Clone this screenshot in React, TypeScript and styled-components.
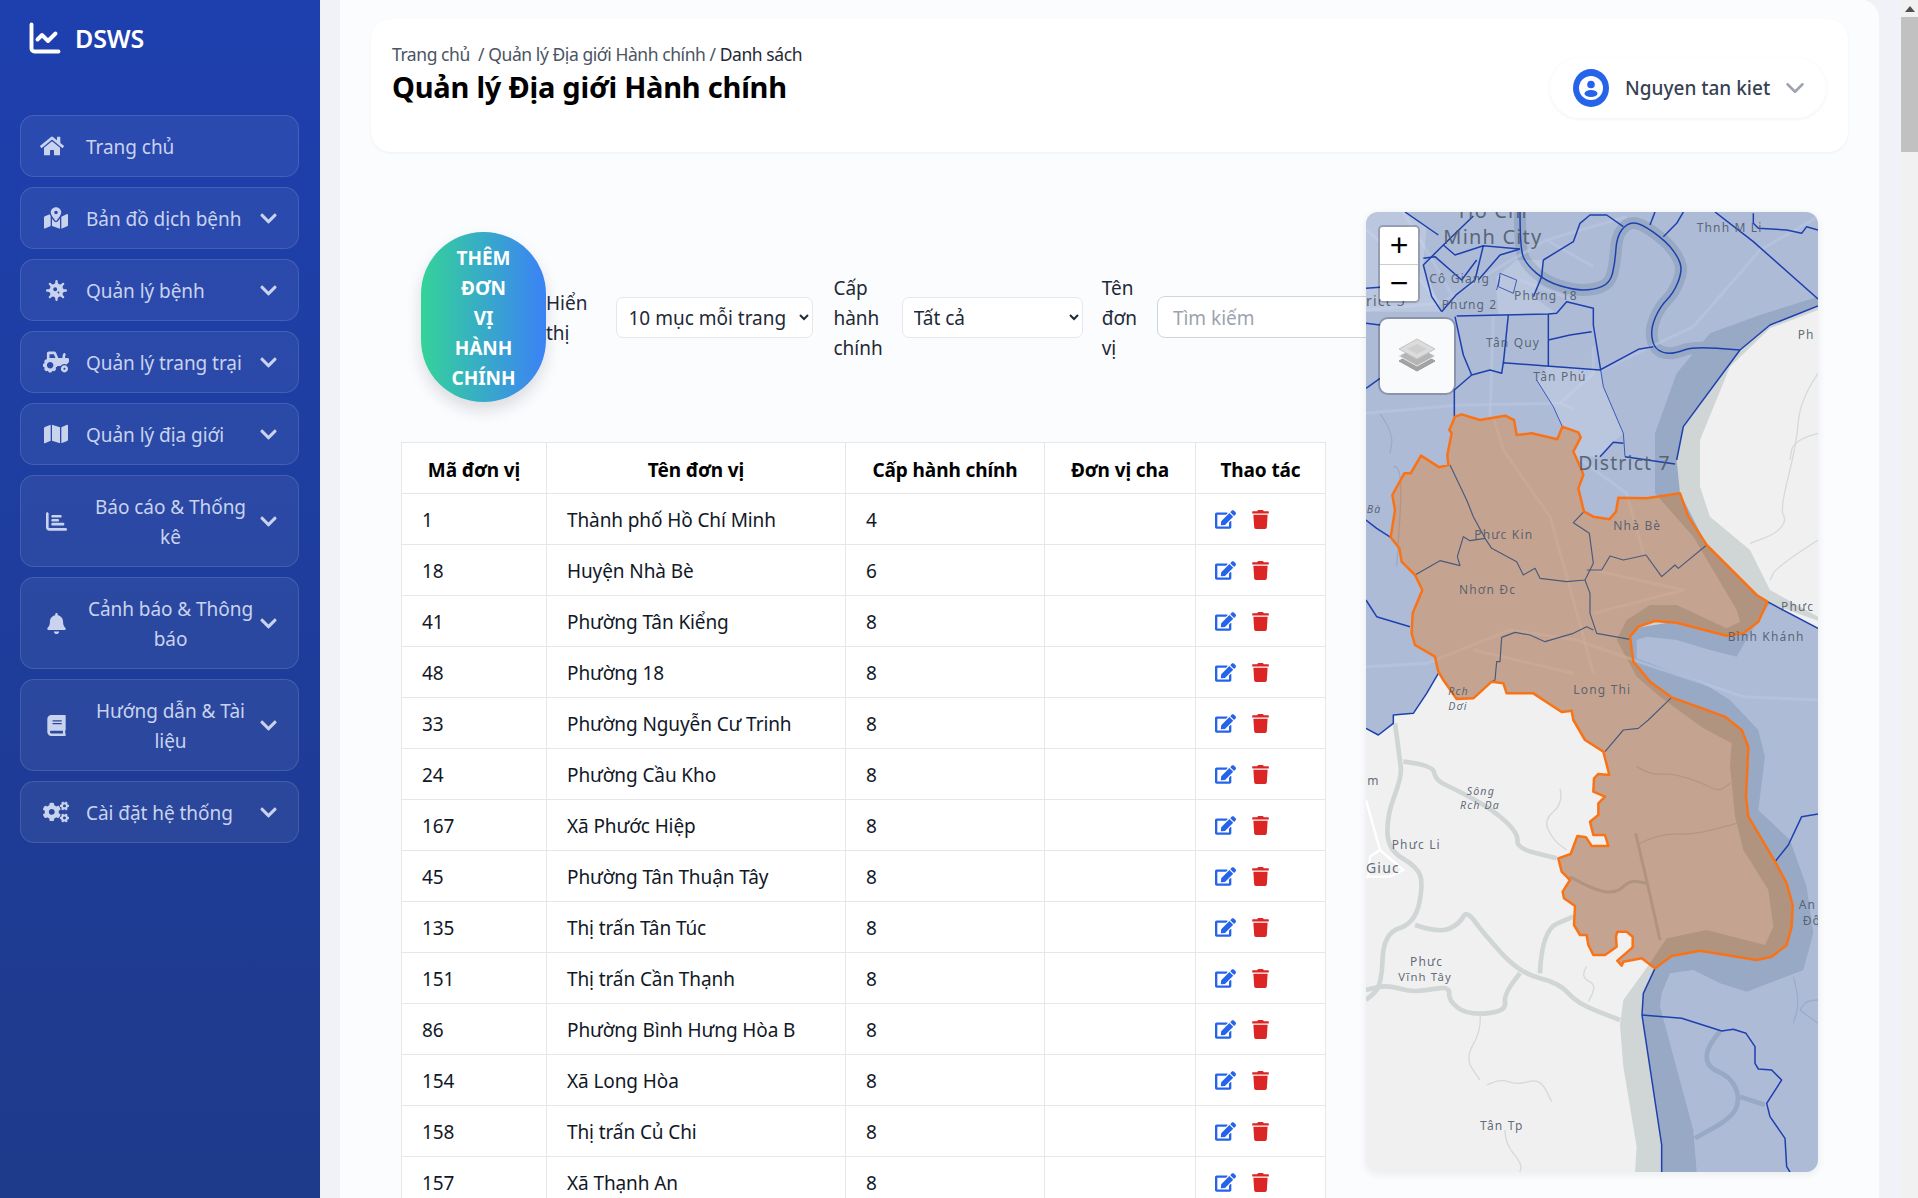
import React from "react";
import styled, { createGlobalStyle } from "styled-components";
import { ChartLine, ChevronDown } from "lucide-react";
import { FaHome, FaMapMarkedAlt, FaVirus, FaTractor, FaMap, FaBell, FaBook, FaCogs, FaChevronDown, FaEdit, FaTrash } from "react-icons/fa";
import { FaChartBar } from "react-icons/fa6";

const FONT = `"Noto Sans", "Open Sans", sans-serif`;

const Global = createGlobalStyle`
  html, body { margin: 0; padding: 0; height: 100%; overflow: hidden; }
  body { font-family: ${FONT}; color: #111827; background: #f1f4fa; }
  * { box-sizing: border-box; }
`;

const Page = styled.div`
  display: flex;
  height: 100vh;
  overflow: hidden;
`;

const Sidebar = styled.aside`
  flex: none;
  width: 320px;
  background: linear-gradient(180deg, #1e40af 0%, #1e3a8a 100%);
  padding: 0 20px;
`;

const Brand = styled.div`
  display: flex;
  align-items: center;
  gap: 12px;
  height: 76px;
  padding-left: 7px;
  margin-bottom: 39px;
  color: #fff;
  font-size: 25px;
  font-weight: 600;
  letter-spacing: -0.1px;
`;

const Menu = styled.nav`
  display: flex;
  flex-direction: column;
  gap: 10px;
  width: 279px;
`;

const MenuItem = styled.div`
  display: flex;
  align-items: center;
  padding: 15px 20px 15px 19px;
  border: 1px solid rgba(255, 255, 255, 0.12);
  border-radius: 14px;
  background: rgba(255, 255, 255, 0.06);
  color: #c9d3ee;
  font-size: 19px;
  line-height: 30px;
  letter-spacing: -0.05px;
`;

const MenuIcon = styled.span<{ $start?: boolean }>`
  flex: none;
  display: flex;
  justify-content: ${(p) => (p.$start ? "flex-start" : "center")};
  width: 32px;
  margin-right: 14px;
`;

const MenuLabel = styled.span<{ $center?: boolean }>`
  flex: 1;
  padding-top: 1px;
  padding-right: ${(p) => (p.$center ? "4px" : "0")};
  margin-bottom: -1px;
  white-space: nowrap;
  text-align: ${(p) => (p.$center ? "center" : "left")};
`;

const MenuChevron = styled.span`
  flex: none;
  display: flex;
  font-size: 19px;
`;

const Main = styled.main`
  flex: 1;
  min-width: 0;
  padding: 0 22px 0 20px;
  background: #f0f2f7;
`;

const Content = styled.div`
  height: 100%;
  padding: 19px 31px;
  background: #fbfcfe;
  border-top-right-radius: 18px;
  overflow: hidden;
`;

const Header = styled.header`
  display: flex;
  justify-content: space-between;
  height: 133px;
  padding: 22px 22px 0 21px;
  background: #fff;
  border-radius: 20px;
  box-shadow: 0 1px 3px rgba(15, 23, 42, 0.05);
`;

const Breadcrumb = styled.div`
  font-size: 17.5px;
  line-height: 26px;
  color: #4b5563;
  letter-spacing: -0.43px;
  white-space: pre;
`;

const Crumb = styled.span`
  color: #1f2937;
`;

const Title = styled.h1`
  margin: 0;
  font-size: 29px;
  line-height: 39px;
  font-weight: 700;
  color: #000;
  letter-spacing: -0.23px;
`;

const UserPill = styled.div`
  display: flex;
  align-items: center;
  align-self: flex-start;
  width: 276px;
  height: 60px;
  margin-top: 17px;
  padding: 0 16px 0 23px;
  background: #fff;
  border-radius: 30px;
  box-shadow: 0 1px 4px rgba(15, 23, 42, 0.06);
  color: #374151;
  font-size: 19px;
  font-weight: 500;
`;

const UserName = styled.span`
  flex: 1;
  margin-left: 16px;
  white-space: nowrap;
`;

const UserChevron = styled(ChevronDown)`
  color: #9ca3af;
`;

const Body = styled.div`
  display: flex;
  align-items: flex-start;
  gap: 40px;
  margin-top: 60px;
  padding: 0 29px 0 29px;
`;

const LeftPanel = styled.section`
  flex: none;
  width: 926px;
  padding: 20px 1px 0 1px;
`;

const Toolbar = styled.div`
  display: flex;
  align-items: center;
  height: 170px;
  padding-left: 20px;
  white-space: nowrap;
`;

const AddButton = styled.button`
  flex: none;
  width: 125px;
  height: 170px;
  padding: 2px 28px 0;
  border: 0;
  border-radius: 62px;
  background: linear-gradient(90deg, #34d399 0%, #3b82f6 100%);
  box-shadow: 0 8px 16px rgba(15, 23, 42, 0.14);
  color: #fff;
  font-family: ${FONT};
  font-size: 19px;
  font-weight: 700;
  line-height: 30px;
  white-space: normal;
`;

const FieldLabel = styled.label<{ $gap: number }>`
  flex: none;
  width: min-content;
  margin-right: ${(p) => p.$gap}px;
  padding-top: 2px;
  font-size: 19px;
  line-height: 30px;
  color: #1f2937;
  white-space: normal;
`;

const Select = styled.select<{ $w: number; $after: number }>`
  flex: none;
  width: ${(p) => p.$w}px;
  height: 41px;
  margin-right: ${(p) => p.$after}px;
  padding: 2px 10px 0 7px;
  background-color: #fff;
  border: 1px solid #e5e7eb;
  border-radius: 7px;
  color: #1f2937;
  font-family: ${FONT};
  font-size: 19px;
`;

const SearchInput = styled.input`
  flex: none;
  width: 300px;
  height: 42px;
  padding: 2px 15px 0;
  background: #fff;
  border: 1px solid #d1d5db;
  border-radius: 8px;
  font-family: ${FONT};
  font-size: 19px;
  &::placeholder { color: #9ca3af; opacity: 1; }
`;

const Table = styled.table`
  width: 924px;
  margin-top: 40px;
  border-collapse: collapse;
  table-layout: fixed;
  background: #fff;
  font-size: 19px;
  letter-spacing: -0.1px;
`;

const Th = styled.th`
  height: 51px;
  padding: 3px 8px 0;
  border: 1px solid #e5e7eb;
  color: #000;
  font-weight: 700;
  font-size: 19px;
  text-align: center;
`;

const Td = styled.td`
  height: 51px;
  padding: 2px 20px 0;
  border: 1px solid #e5e7eb;
  color: #111827;
`;

const Actions = styled.div`
  display: flex;
  align-items: center;
  gap: 15px;
  margin: -2px 0 0 -1px;
`;

const EditIcon = styled(FaEdit)`
  color: #2563eb;
  font-size: 21px;
`;

const TrashIcon = styled(FaTrash)`
  color: #dc2626;
  font-size: 19px;
`;

const MapBox = styled.div`
  position: relative;
  z-index: 2;
  flex: none;
  width: 452px;
  height: 960px;
  overflow: hidden;
  border-radius: 12px;
  background: #f0f0f0;
  box-shadow: 0 2px 8px rgba(15, 23, 42, 0.08);
`;

const MapSvg = styled.svg`
  display: block;
  width: 452px;
  height: 960px;
`;

const MapLabel = styled.text<{ $s?: number; $italic?: boolean }>`
  font-family: "Noto Sans", "DejaVu Sans", sans-serif;
  font-size: ${(p) => p.$s ?? 36}px;
  font-style: ${(p) => (p.$italic ? "italic" : "normal")};
  letter-spacing: 3.5px;
  fill: #4f5a6a;
  fill-opacity: 0.9;
`;

const ZoomControl = styled.div`
  position: absolute;
  top: 13px;
  left: 12px;
  width: 42px;
  border: 2px solid rgba(0, 0, 0, 0.2);
  border-radius: 5px;
  background-clip: padding-box;
  overflow: hidden;
`;

const ZoomBtn = styled.div`
  display: flex;
  align-items: center;
  justify-content: center;
  height: 37px;
  background: #fff;
  color: #000;
  font-family: "Liberation Sans", sans-serif;
  font-size: 32px;
  line-height: 37px;
  & + & { border-top: 1px solid #ccc; }
`;

const LayerControl = styled.div`
  position: absolute;
  top: 105px;
  left: 12px;
  display: flex;
  align-items: center;
  justify-content: center;
  width: 78px;
  height: 78px;
  background: rgba(255, 255, 255, 0.92);
  border: 2px solid rgba(0, 0, 0, 0.2);
  border-radius: 10px;
  background-clip: padding-box;
`;

const Scrollbar = styled.div`
  flex: none;
  display: flex;
  flex-direction: column;
  width: 17px;
  background: #f1f1f1;
`;

const ScrollArrow = styled.div`
  flex: none;
  display: flex;
  justify-content: center;
  align-items: center;
  height: 17px;
`;

const ScrollThumb = styled.div`
  flex: none;
  height: 135px;
  background: #c1c1c1;
`;

const menu = [
  { icon: <FaHome size={24} />, label: "Trang chủ", start: true, plain: true },
  { icon: <FaMapMarkedAlt size={24} />, label: "Bản đồ dịch bệnh" },
  { icon: <FaVirus size={21} />, label: "Quản lý bệnh" },
  { icon: <FaTractor size={26} />, label: "Quản lý trang trại" },
  { icon: <FaMap size={24} />, label: "Quản lý địa giới" },
  { icon: <FaChartBar size={21} />, label: ["Báo cáo & Thống", "kê"] },
  { icon: <FaBell size={21} />, label: ["Cảnh báo & Thông", "báo"] },
  { icon: <FaBook size={21} />, label: ["Hướng dẫn & Tài", "liệu"] },
  { icon: <FaCogs size={26} />, label: "Cài đặt hệ thống" },
];

const rows: [string, string, string][] = [
  ["1", "Thành phố Hồ Chí Minh", "4"],
  ["18", "Huyện Nhà Bè", "6"],
  ["41", "Phường Tân Kiểng", "8"],
  ["48", "Phường 18", "8"],
  ["33", "Phường Nguyễn Cư Trinh", "8"],
  ["24", "Phường Cầu Kho", "8"],
  ["167", "Xã Phước Hiệp", "8"],
  ["45", "Phường Tân Thuận Tây", "8"],
  ["135", "Thị trấn Tân Túc", "8"],
  ["151", "Thị trấn Cần Thạnh", "8"],
  ["86", "Phường Bình Hưng Hòa B", "8"],
  ["154", "Xã Long Hòa", "8"],
  ["158", "Thị trấn Củ Chi", "8"],
  ["157", "Xã Thạnh An", "8"],
];

const smooth = (d: string) => {
  const nums = d.match(/-?\d+(\.\d+)?/g)!.map(Number);
  const p: [number, number][] = [];
  for (let i = 0; i < nums.length; i += 2) p.push([nums[i], nums[i + 1]]);
  let out = `M${p[0][0]} ${p[0][1]}`;
  for (let i = 1; i < p.length - 1; i++) {
    const mx = (p[i][0] + p[i + 1][0]) / 2;
    const my = (p[i][1] + p[i + 1][1]) / 2;
    out += `Q${p[i][0]} ${p[i][1]} ${mx} ${my}`;
  }
  const l = p[p.length - 1];
  return `${out}L${l[0]} ${l[1]}`;
};

const ORANGE =
  "M285 650L305 643L360 660L435 647L462 660L470 705L515 700L592 718L607 680L655 697L662 712L640 755L665 810L670 825L655 865L672 935L700 950L748 958L768 935L775 893L860 895L960 880L985 950L1040 1035L1190 1185L1222 1205L1195 1265L1150 1300L1100 1307L950 1268L885 1263L835 1280L810 1310L820 1385L870 1445L935 1492L1095 1550L1145 1590L1165 1640L1158 1790L1165 1850L1245 1985L1280 2050L1298 2115L1295 2180L1280 2235L1235 2270L1190 2280L1020 2252L935 2268L885 2305L845 2275L790 2285L785 2297L772 2282L818 2242L818 2210L800 2195L772 2195L768 2210L770 2240L735 2265L700 2265L685 2235L680 2205L660 2205L642 2175L645 2118L612 2095L608 2075L630 2040L605 2015L595 1975L632 1962L652 1908L678 1912L695 1938L745 1938L735 1905L700 1905L690 1865L715 1845L715 1810L735 1790L700 1775L702 1735L715 1722L748 1725L730 1655L675 1620L640 1560L635 1532L605 1536L520 1480L440 1480L430 1450L395 1445L340 1495L290 1497L250 1440L235 1415L225 1370L165 1335L155 1300L158 1240L187 1170L165 1125L125 1085L118 1045L92 1012L105 930L97 885L133 820L152 820L183 767L238 802L265 795L262 765L275 700L268 690Z";

const RIVER =
  "M1374 290L1200 345L1050 400L950 520L885 700L885 880L1000 1010L1130 1230L1140 1265L1100 1285L950 1215L870 1215L800 1260L770 1320L830 1430L900 1490L1030 1585L1115 1630L1110 1700L1125 1850L1150 1950L1225 2070L1240 2180L1215 2235L1040 2190L920 2215L870 2290L790 2400L780 2475L790 2600L830 2840L825 2916L1010 2916L1000 2790L900 2420L905 2380L930 2320L1000 2310L1080 2350L1160 2375L1330 2310L1360 2200L1340 2060L1290 1920L1195 1830L1215 1670L1195 1590L1110 1500L1030 1450L830 1375L830 1320L860 1310L950 1320L1050 1350L1130 1370L1170 1300L1230 1210L1374 1262L1374 1250L1230 1170L1170 1050L1050 950L1020 860L1020 720L1110 500L1230 385L1374 330Z";

const BLUE_TOP =
  "M18 36L1374 36L1374 318L1230 375L1140 450L970 680L950 780L960 880L1040 1035L700 1300L235 1415L200 1480L160 1540L100 1545L100 1570L55 1605L18 1585Z";
const BLUE_RIGHT =
  "M1222 1205L1374 1285L1374 2916L905 2916L905 2835L846 2445L850 2380L885 2305L1000 2150L1000 1600L800 1450L790 1290L1100 1240Z";

const riverLoop = "M480 36L480 147L500 195L560 245L640 270L700 270L750 250L765 190L770 110L800 70L840 68L920 125L960 180L965 220L940 280L900 320L872 385L880 440L910 460L945 460L1000 440L1140 450";
const tributaries = [
  "M105 1570L120 1680L125 1730L80 1850L85 1950L170 2000L190 2050L165 2170L70 2200L65 2360L18 2400",
  "M130 1685L220 1695L225 1740L290 1770L400 1830L475 1900L470 1945L590 1975",
  "M165 2175L240 2200L300 2170L320 2130L370 2200L480 2320L600 2350L650 2410L780 2460",
  "M540 2320L545 2190L640 2150",
  "M480 2320L430 2380L440 2435L320 2445L265 2400L270 2360L200 2370L150 2375L80 2355L18 2370",
  "M1080 2495L1040 2540L1040 2600L1110 2630L1140 2690L1120 2750L1005 2815",
  "M1140 2690L1215 2715",
];
const orangeBranches = [
  "M827 1900L860 2040L900 2220",
  "M630 2030L700 2070L770 2080L810 2040L860 2050",
];
const thinTrib = [
  "M360 2440L365 2490L315 2575L360 2640",
  "M380 2655L420 2635L470 2655L540 2635L575 2705",
  "M435 2790L435 2830L485 2890L480 2916",
  "M600 1765L610 1810L550 1860L580 1920L620 1950",
  "M1374 520L1320 600L1310 730L1260 930L1280 960L1250 1000L1170 1030",
  "M1374 1020L1250 1100L1230 1140",
  "M1374 700L1300 720L1290 780",
  "M830 1700L870 1725L940 1720L1030 1750L1075 1775L1110 1750",
  "M840 1930L900 1900L1000 1905L1130 1870",
  "M680 2300L660 2330L710 2355L685 2405",
  "M1300 2330L1320 2400L1300 2470",
  "M1320 2430L1374 2470",
  "M1374 2400L1340 2400L1320 2430",
  "M60 640L100 700L90 760",
  "M100 800L130 790L110 1100",
];
const roads = [
  "M18 640L300 615L600 610L640 625",
  "M400 650L430 750L570 950L640 1200L700 1420",
  "M18 1400L200 1390L450 1290L650 1320L850 1390L1150 1490L1374 1500",
  "M700 1240L970 1170L700 1110",
  "M650 770L800 880L850 1060",
  "M725 510L1000 380L1200 150L1374 50",
  "M18 330L240 310L420 200L560 120L800 50",
  "M18 90L130 180L240 310",
  "M130 36L240 220L300 330",
  "M560 120L700 200M480 240L640 300",
  "M600 610L700 520L700 440",
  "M400 350L390 650",
  "M340 1350L640 1420",
];

const whiteStreets = "M18 1800L60 1950L130 2010L90 2030L18 2030M60 1950L30 1970L25 2030";

const blueLines = [
  "M135 36L235 105", "M340 48L250 135L190 195L215 290L245 335", "M250 135L285 165L370 137L480 147",
  "M370 137L345 240L290 283L245 335", "M480 147L420 165L355 240", "M190 175L225 170L305 240L350 180",
  "M18 265L60 262", "M18 370L60 375", "M18 565L60 535",
  smooth(riverLoop),
  "M1140 450L970 680L950 780", "M880 440L835 448L720 510L560 498L430 488L425 520L390 510L335 525L310 465L285 350",
  "M290 348L565 342L590 340L620 305L700 325L700 375L722 510", "M565 342L565 500", "M565 420L630 405L695 395",
  "M445 345L430 490", "M550 180L545 230L520 290", "M550 180L640 125L660 70L690 45L740 45L790 80",
  "M870 75L885 36", "M910 110L950 70L970 36", "M1065 36L1180 125L1374 297",
  "M1180 40L1180 70L1195 85L1280 90L1325 100L1340 80L1374 90", "M335 525L283 570L283 650",
  "M1374 318L1230 375L1140 450", "M795 770L945 792", "M720 770L760 727L790 730",
  "M18 960L50 985L92 1012", "M18 1200L50 1250L150 1280", "M235 1420L200 1480L160 1540L100 1545L100 1570L55 1605L18 1585",
  "M1222 1205L1374 1285", "M885 2305L850 2380L846 2445L905 2835L905 2916",
  "M846 2445L965 2455L1085 2493L1120 2488L1158 2500L1185 2540L1185 2590L1195 2607L1235 2610L1265 2640L1220 2710L1230 2750L1275 2815L1280 2900L1290 2916",
  "M1245 1985L1285 1935L1325 1850L1374 1842",
];
const thinBlue = ["M530 540L580 620L607 680", "M722 510L730 560L790 700L795 770", "M420 220L470 240L460 280L415 260Z", "M420 230L410 270"];
const innerLines = [
  "M270 795L320 900L340 950L375 1015L395 1045L470 1085L490 1125L525 1105L540 1135L620 1145L675 1140L700 1090L688 1000L640 968L672 935",
  "M165 1125L240 1082L300 1097L292 1070L310 1010L330 1022L375 1015",
  "M675 1140L690 1180L690 1240L710 1300L810 1318",
  "M680 1110L725 1110L750 1068L790 1080L858 1065L905 1130L945 1095L955 1105L1040 1035",
  "M700 1290L680 1280L640 1300L555 1325L510 1305L465 1297L425 1312L420 1385L410 1385L405 1440L395 1445",
  "M935 1492L865 1560L835 1585L790 1590L735 1655",
];

const labels: { t: string; x: number; y: number; s?: number; i?: boolean }[] = [
  { t: "Ho Chi", x: 296, y: 55, s: 60 },
  { t: "Minh City", x: 250, y: 132, s: 60 },
  { t: "Thnh M Li", x: 1010, y: 97 },
  { t: "Cô Giang", x: 208, y: 250 },
  { t: "rict 5", x: 18, y: 318, s: 42 },
  { t: "Phưng 2", x: 245, y: 328 },
  { t: "Phưng 18", x: 462, y: 300 },
  { t: "Tân Quy", x: 378, y: 440 },
  { t: "Tân Phú", x: 520, y: 542 },
  { t: "Ph", x: 1313, y: 418 },
  { t: "District 7", x: 655, y: 810, s: 58 },
  { t: "Phưc Kin", x: 343, y: 1018 },
  { t: "Nhà Bè", x: 760, y: 990 },
  { t: "Nhơn Đc", x: 297, y: 1182 },
  { t: "Phưc", x: 1263, y: 1232 },
  { t: "Bình Khánh", x: 1103, y: 1322 },
  { t: "Long Thi", x: 640, y: 1482 },
  { t: "Bà", x: 20, y: 940, s: 32, i: true },
  { t: "Rch", x: 265, y: 1485, s: 32, i: true },
  { t: "Dơi", x: 265, y: 1530, s: 32, i: true },
  { t: "Sông", x: 320, y: 1785, s: 32, i: true },
  { t: "Rch Da", x: 300, y: 1827, s: 32, i: true },
  { t: "m", x: 22, y: 1755 },
  { t: "Phưc Li", x: 95, y: 1947 },
  { t: "Giuc", x: 18, y: 2020, s: 42 },
  { t: "Phưc", x: 150, y: 2297 },
  { t: "Vĩnh Tây", x: 115, y: 2343, s: 34 },
  { t: "Tân Tp", x: 360, y: 2790 },
  { t: "An", x: 1316, y: 2127 },
  { t: "Đô", x: 1328, y: 2175 },
];

const DiseaseMap = () => (
  <MapSvg viewBox="18 36 1356 2880" preserveAspectRatio="none">
    <defs>
      <clipPath id="orangeClip"><path d={ORANGE} /></clipPath>
      <g id="base">
        <rect x="18" y="36" width="1356" height="2880" fill="#f0f0f0" />
        <path d={RIVER} fill="#d0d5d6" />
        <path d={smooth(riverLoop)} fill="none" stroke="#d0d5d6" strokeWidth="36" strokeLinejoin="round" />
        {tributaries.map((d) => (
          <path key={d} d={smooth(d)} fill="none" stroke="#d0d5d6" strokeWidth="14" strokeLinejoin="round" />
        ))}
        {orangeBranches.map((d) => (
          <path key={d} d={smooth(d)} fill="none" stroke="#d0d5d6" strokeWidth="9" strokeLinejoin="round" />
        ))}
        {thinTrib.map((d) => (
          <path key={d} d={smooth(d)} fill="none" stroke="#d5d9da" strokeWidth="4" strokeLinejoin="round" />
        ))}
        <path d={whiteStreets} fill="none" stroke="#fff" strokeWidth="7" />
        {roads.map((d) => (
          <path key={d} d={d} fill="none" stroke="#fff" strokeOpacity="0.6" strokeWidth="9" strokeLinejoin="round" />
        ))}
      </g>
    </defs>
    <use href="#base" />
    <path d={BLUE_TOP} fill="#1b48a2" fillOpacity="0.31" />
    <path d={BLUE_RIGHT} fill="#1b48a2" fillOpacity="0.31" />
    <path d="M530 540L560 500L722 510L730 560L790 700L760 727L720 770L655 770L640 755L662 712L655 697L607 680L580 620Z" fill="#fff" fillOpacity="0.16" />
    <path d="M410 230L470 180L550 180L520 290L590 340L445 345L415 345L410 290Z" fill="#fff" fillOpacity="0.16" />
    <path d="M18 36L135 36L200 78L190 195L245 335L18 335Z" fill="#fff" fillOpacity="0.18" />
    {blueLines.map((d) => (
      <path key={d} d={d} fill="none" stroke="#1e40af" strokeWidth="4.5" strokeLinejoin="round" />
    ))}
    {thinBlue.map((d) => (
      <path key={d} d={d} fill="none" stroke="#1e40af" strokeOpacity="0.8" strokeWidth="3" />
    ))}
    <g clipPath="url(#orangeClip)">
      <use href="#base" />
      <path d={ORANGE} fill="#823200" fillOpacity="0.4" />
      {innerLines.map((d) => (
        <path key={d} d={d} fill="none" stroke="#4b5a7a" strokeWidth="3.5" strokeLinejoin="round" />
      ))}
    </g>
    <path d={ORANGE} fill="none" stroke="#f97316" strokeWidth="7.5" strokeLinejoin="round" />
    {labels.map((l) => (
      <MapLabel key={l.t + l.x} x={l.x} y={l.y} $s={l.s} $italic={l.i}>{l.t}</MapLabel>
    ))}
  </MapSvg>
);

const LayersIcon = () => (
  <svg width="40" height="38" viewBox="0 0 40 38">
    <path d="M20 14L38 24L20 34L2 24Z" fill="#a3a3a3" stroke="#9a9a9a" strokeWidth="1" />
    <path d="M20 9L38 19L20 29L2 19Z" fill="#b5b5b5" stroke="#e8e8e8" strokeWidth="1" />
    <path d="M20 2L38 12L20 22L2 12Z" fill="#dcdcdc" stroke="#c4c4c4" strokeWidth="1" />
    <path d="M20 7L30 12L20 17L10 12Z" fill="#cfcfcf" />
  </svg>
);

const UserIcon = () => (
  <svg width="36" height="38" viewBox="0 0 36 38">
    <ellipse cx="18" cy="19" rx="18" ry="19" fill="#2563eb" />
    <circle cx="18" cy="19" r="12" fill="#fff" />
    <circle cx="18" cy="15.5" r="3.8" fill="#2563eb" />
    <ellipse cx="18" cy="24.5" rx="6.5" ry="3.6" fill="#2563eb" />
  </svg>
);

export default function App() {
  return (
    <Page>
      <Global />
      <Sidebar>
        <Brand>
          <ChartLine size={36} strokeWidth={2.6} />
          DSWS
        </Brand>
        <Menu>
          {menu.map((m) => {
            const multi = Array.isArray(m.label);
            return (
              <MenuItem key={String(m.label)}>
                <MenuIcon $start={m.start}>{m.icon}</MenuIcon>
                <MenuLabel $center={multi}>
                  {multi ? (
                    <>
                      {(m.label as string[])[0]}
                      <br />
                      {(m.label as string[])[1]}
                    </>
                  ) : (
                    m.label
                  )}
                </MenuLabel>
                {!m.plain && (
                  <MenuChevron>
                    <FaChevronDown />
                  </MenuChevron>
                )}
              </MenuItem>
            );
          })}
        </Menu>
      </Sidebar>
      <Main>
        <Content>
          <Header>
            <div>
              <Breadcrumb>
                Trang chủ  / Quản lý Địa giới Hành chính / <Crumb>Danh sách</Crumb>
              </Breadcrumb>
              <Title>Quản lý Địa giới Hành chính</Title>
            </div>
            <UserPill>
              <UserIcon />
              <UserName>Nguyen tan kiet</UserName>
              <UserChevron size={30} strokeWidth={2} />
            </UserPill>
          </Header>
          <Body>
            <LeftPanel>
              <Toolbar>
                <AddButton>THÊM ĐƠN VỊ HÀNH CHÍNH</AddButton>
                <FieldLabel $gap={29}>Hiển thị</FieldLabel>
                <Select $w={197} $after={20} defaultValue="10">
                  <option value="10">10 mục mỗi trang</option>
                </Select>
                <FieldLabel $gap={19}>Cấp hành chính</FieldLabel>
                <Select $w={181} $after={19} defaultValue="all">
                  <option value="all">Tất cả</option>
                </Select>
                <FieldLabel $gap={20}>Tên đơn vị</FieldLabel>
                <SearchInput placeholder="Tìm kiếm" />
              </Toolbar>
              <Table>
                <colgroup>
                  <col width="145" />
                  <col width="299" />
                  <col width="199" />
                  <col width="151" />
                  <col width="130" />
                </colgroup>
                <thead>
                  <tr>
                    <Th>Mã đơn vị</Th>
                    <Th>Tên đơn vị</Th>
                    <Th>Cấp hành chính</Th>
                    <Th>Đơn vị cha</Th>
                    <Th>Thao tác</Th>
                  </tr>
                </thead>
                <tbody>
                  {rows.map((r) => (
                    <tr key={r[0]}>
                      <Td>{r[0]}</Td>
                      <Td>{r[1]}</Td>
                      <Td>{r[2]}</Td>
                      <Td />
                      <Td>
                        <Actions>
                          <EditIcon />
                          <TrashIcon />
                        </Actions>
                      </Td>
                    </tr>
                  ))}
                </tbody>
              </Table>
            </LeftPanel>
            <MapBox>
              <DiseaseMap />
              <ZoomControl>
                <ZoomBtn>+</ZoomBtn>
                <ZoomBtn>−</ZoomBtn>
              </ZoomControl>
              <LayerControl>
                <LayersIcon />
              </LayerControl>
            </MapBox>
          </Body>
        </Content>
      </Main>
      <Scrollbar>
        <ScrollArrow>
          <svg width="10" height="6" viewBox="0 0 10 6"><path d="M5 0L10 6H0Z" fill="#505050" /></svg>
        </ScrollArrow>
        <ScrollThumb />
      </Scrollbar>
    </Page>
  );
}
